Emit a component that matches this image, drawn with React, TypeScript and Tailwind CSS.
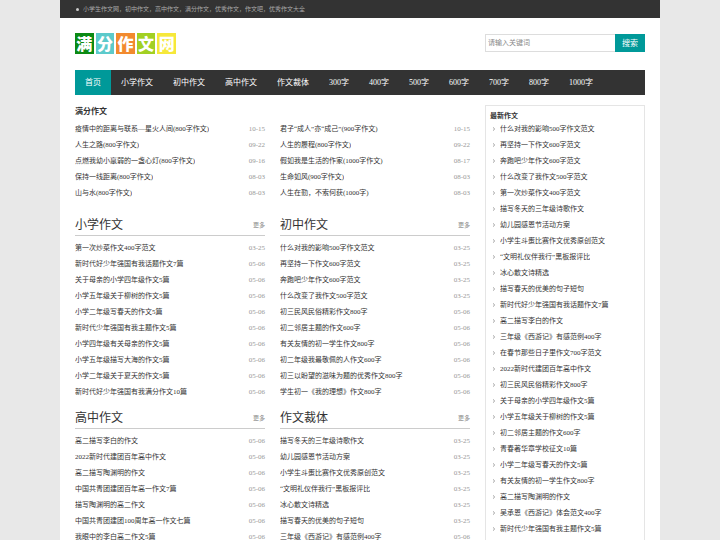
import { useState } from "react";

type Post = {
  title: string;
  date: string;
};

type Section = {
  title: string;
  posts: Post[];
};

const post = (title: string, date: string): Post => ({ title, date });

const logo = [
  { char: "满", className: "bg-[#0b8a14]" },
  { char: "分", className: "bg-[#5ccacb]" },
  { char: "作", className: "bg-[#f28a2e]" },
  { char: "文", className: "bg-[#a2d022]" },
  { char: "网", className: "bg-[#f6e83a]" },
];

const navItems = [
  "首页",
  "小学作文",
  "初中作文",
  "高中作文",
  "作文裁体",
  "300字",
  "400字",
  "500字",
  "600字",
  "700字",
  "800字",
  "1000字",
];

const featured: Post[][] = [
  [
    post("疫情中的距离与联系—星火人间(800字作文)", "10-15"),
    post("人生之路(800字作文)", "09-22"),
    post("点燃我幼小羸弱的一盏心灯(800字作文)", "09-16"),
    post("保持一线距离(800字作文)", "08-03"),
    post("山与水(800字作文)", "08-03"),
  ],
  [
    post("君子“成人”亦“成己”(900字作文)", "10-15"),
    post("人生的履程(800字作文)", "09-22"),
    post("假如我是生活的作家(1000字作文)", "08-17"),
    post("生命如风(900字作文)", "08-03"),
    post("人生在勤，不索何获(1000字)", "08-03"),
  ],
];

const sections: Section[] = [
  {
    title: "小学作文",
    posts: [
      post("第一次炒菜作文400字范文", "03-25"),
      post("新时代好少年强国有我话题作文7篇", "05-06"),
      post("关于母亲的小学四年级作文5篇", "05-06"),
      post("小学五年级关于柳树的作文5篇", "05-06"),
      post("小学二年级写春天的作文5篇", "05-06"),
      post("新时代少年强国有我主题作文5篇", "05-06"),
      post("小学四年级有关母亲的作文5篇", "05-06"),
      post("小学五年级描写大海的作文5篇", "05-06"),
      post("小学二年级关于夏天的作文5篇", "05-06"),
      post("新时代好少年强国有我满分作文10篇", "05-06"),
    ],
  },
  {
    title: "初中作文",
    posts: [
      post("什么对我的影响500字作文范文", "03-25"),
      post("再坚持一下作文600字范文", "03-25"),
      post("奔跑吧少年作文600字范文", "03-25"),
      post("什么改变了我作文500字范文", "03-25"),
      post("初三民风民俗精彩作文800字", "05-06"),
      post("初二邻居主题的作文600字", "05-06"),
      post("有关友情的初一学生作文800字", "05-06"),
      post("初二年级我最敬佩的人作文600字", "05-06"),
      post("初三以盼望的滋味为题的优秀作文800字", "05-06"),
      post("学生初一《我的理想》作文800字", "05-06"),
    ],
  },
  {
    title: "高中作文",
    posts: [
      post("高二描写李白的作文", "05-06"),
      post("2022新时代建团百年高中作文", "05-06"),
      post("高二描写陶渊明的作文", "05-06"),
      post("中国共青团建团百年高一作文7篇", "05-06"),
      post("描写陶渊明的高二作文", "05-06"),
      post("中国共青团建团100周年高一作文七篇", "05-06"),
      post("我眼中的李白高二作文5篇", "05-06"),
    ],
  },
  {
    title: "作文裁体",
    posts: [
      post("描写冬天的三年级诗歌作文", "03-25"),
      post("幼儿园感恩节活动方案", "03-25"),
      post("小学生斗蛋比赛作文优秀原创范文", "03-25"),
      post("“文明礼仪伴我行”黑板报评比", "03-25"),
      post("冰心散文诗精选", "03-25"),
      post("描写春天的优美的句子短句", "03-25"),
      post("三年级《西游记》有感范例400字", "05-06"),
    ],
  },
];

const latest = [
  "什么对我的影响500字作文范文",
  "再坚持一下作文600字范文",
  "奔跑吧少年作文600字范文",
  "什么改变了我作文500字范文",
  "第一次炒菜作文400字范文",
  "描写冬天的三年级诗歌作文",
  "幼儿园感恩节活动方案",
  "小学生斗蛋比赛作文优秀原创范文",
  "“文明礼仪伴我行”黑板报评比",
  "冰心散文诗精选",
  "描写春天的优美的句子短句",
  "新时代好少年强国有我话题作文7篇",
  "高二描写李白的作文",
  "三年级《西游记》有感范例400字",
  "在春节那些日子里作文700字范文",
  "2022新时代建团百年高中作文",
  "初三民风民俗精彩作文800字",
  "关于母亲的小学四年级作文5篇",
  "小学五年级关于柳树的作文5篇",
  "初二邻居主题的作文600字",
  "青春著华章学校征文10篇",
  "小学二年级写春天的作文5篇",
  "有关友情的初一学生作文800字",
  "高二描写陶渊明的作文",
  "吴承恩《西游记》体会范文400字",
  "新时代少年强国有我主题作文5篇",
];

function Chevron() {
  return (
    <svg viewBox="0 0 4 4" className="size-1 fill-none stroke-[#888]">
      <path d="M1 0.4 L2.7 2 L1 3.6" strokeWidth="0.8" />
    </svg>
  );
}

function PostList({ posts }: { posts: Post[] }) {
  return (
    <ul>
      {posts.map(({ title, date }) => (
        <li key={title} className="flex h-4 items-center justify-between">
          <a href="#" className="truncate hover:text-[#099]">
            {title}
          </a>
          <span className="text-[#999]">{date}</span>
        </li>
      ))}
    </ul>
  );
}

function SectionBlock({ title, posts }: Section) {
  return (
    <section>
      <div className="mb-1 flex h-[29px] items-center justify-between border-b border-[#ccc] pt-2">
        <h2 className="text-[12px]">{title}</h2>
        <a href="#" className="text-[6px] text-[#888]">
          更多
        </a>
      </div>
      <PostList posts={posts} />
    </section>
  );
}

function SearchForm() {
  const [keyword, setKeyword] = useState("");

  return (
    <form
      className="flex h-[18px] w-40"
      onSubmit={(e) => e.preventDefault()}
    >
      <input
        type="text"
        aria-label="请输入关键词"
        placeholder="请输入关键词"
        className="min-w-0 flex-1 border border-r-0 border-[#ddd] px-0.5 text-[7px] outline-none placeholder:text-[#888]"
        value={keyword}
        onChange={(e) => setKeyword(e.target.value)}
      />
      <button
        type="submit"
        className="w-[30px] bg-[#099] pt-0.5 text-[8px] text-white"
      >
        搜索
      </button>
    </form>
  );
}

export default function App() {
  return (
    <div className="min-h-screen bg-[#e8e8e8] font-['Liberation_Serif','Noto_Sans_CJK_SC',serif] text-[7px] text-[#333]">
      <div className="mx-auto min-h-screen max-w-[600px] bg-white">
        <div className="flex h-[18px] items-center gap-1 bg-[#333] px-4 text-[6px] text-[#aaa]">
          <span className="size-[3px] rounded-full bg-[#ccc]" />
          <p>
            小学生作文网，初中作文，高中作文，满分作文，优秀作文，作文吧，优秀作文大全
          </p>
        </div>

        <div className="px-[15px]">
          <header className="mb-0.5 flex h-[50px] items-center justify-between">
            <a
              href="#"
              className="grid w-[101px] grid-cols-5 gap-0.5 font-['Noto_Sans_CJK_SC',sans-serif] text-[16px] leading-[21px] font-black text-white"
            >
              {logo.map(({ char, className }) => (
                <span key={char} className={`h-[21px] text-center ${className}`}>
                  {char}
                </span>
              ))}
            </a>
            <SearchForm />
          </header>

          <nav className="flex h-[25px] bg-[#333] text-[8px] text-white">
            {navItems.map((item, i) => (
              <a
                key={item}
                href="#"
                className={`flex items-center px-2.5 ${i === 0 ? "bg-[#099]" : ""}`}
              >
                {item}
              </a>
            ))}
          </nav>

          <div className="flex gap-[15px] pt-2.5">
            <main className="flex-1">
              <h2 className="h-4 text-[8px] leading-[14px] font-bold">
                满分作文
              </h2>
              <div className="mb-1.5 grid grid-cols-2 gap-x-[15px]">
                {featured.map((posts, i) => (
                  <PostList key={i} posts={posts} />
                ))}
              </div>
              <div className="grid grid-cols-2 gap-x-[15px]">
                {sections.map((section) => (
                  <SectionBlock key={section.title} {...section} />
                ))}
              </div>
            </main>

            <aside className="w-40 border border-[#e5e5e5] px-1 pt-1">
              <h3 className="h-[11px] text-[7px] leading-[12px] font-bold">
                最新作文
              </h3>
              <ul>
                {latest.map((title) => (
                  <li key={title} className="flex h-4 items-center">
                    <span className="w-2.5 pl-0.5">
                      <Chevron />
                    </span>
                    <a href="#" className="truncate hover:text-[#099]">
                      {title}
                    </a>
                  </li>
                ))}
              </ul>
            </aside>
          </div>
        </div>
      </div>
    </div>
  );
}
